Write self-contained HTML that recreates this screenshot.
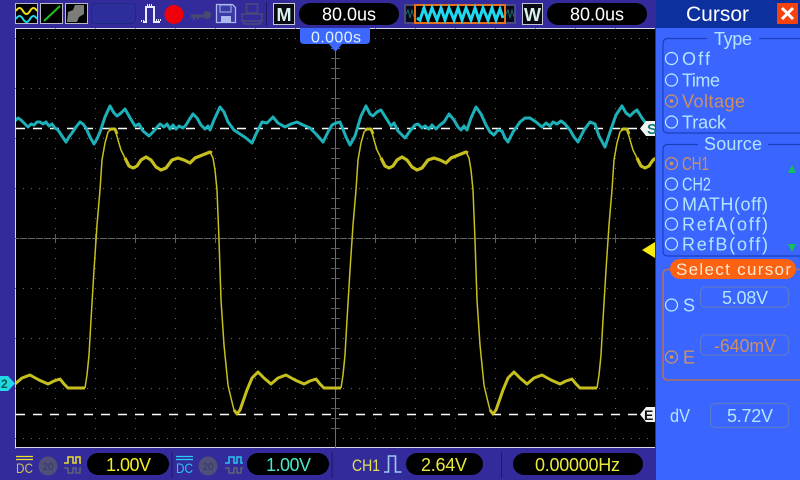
<!DOCTYPE html>
<html><head><meta charset="utf-8"><style>
html,body{margin:0;padding:0;background:#332a9c;width:800px;height:480px;overflow:hidden}
svg{display:block;font-family:"Liberation Sans",sans-serif}
text{font-family:"Liberation Sans",sans-serif}
.t{fill:#b4e4ff;font-size:18px}
.o{fill:#cf8f60;font-size:18px}
.r{fill:none;stroke:#c6ecff;stroke-width:1.2}
.ro{fill:none;stroke:#d2925e;stroke-width:1.2}
.box{fill:none;stroke:#5c78cf;stroke-width:1.2}
.pill{fill:#000}
</style></head><body>
<svg width="800" height="480" viewBox="0 0 800 480" xmlns="http://www.w3.org/2000/svg">
<defs>
<pattern id="hd" x="15" y="38" width="8" height="50" patternUnits="userSpaceOnUse"><rect x="0" y="0" width="1" height="1" fill="#6a6a6a"/></pattern>
<pattern id="vd" x="15" y="28" width="40" height="10" patternUnits="userSpaceOnUse"><rect x="0" y="0" width="1" height="1" fill="#6a6a6a"/></pattern>
<clipPath id="scr"><rect x="16" y="29" width="639" height="419"/></clipPath>
<g id="yt"><polyline fill="none" stroke="#c6c01f" stroke-width="1.5" stroke-linejoin="round" points="85,388 87,375 89,355 91,320 94,270 97,225 100,190 102,160 105,143 108,132 111,129 115,129 118,140 121,150 125,158 129,166 133,168 137,166 141,160 146,157 151,160 156,167 161,170 166,168 172,160 178,158 184,160 190,163 195,158 200,156 205,154 210,152 213,158 215,170 217,190 219,240 221,300 224,345 228,385 231,398 234,410 237,413 240,410 243,403 247,390 252,378 258,372 264,378 271,384 278,378 286,375 295,380 304,384 310,381 316,379 320,384 324,388 332,388 341,388"/>
<polyline fill="none" stroke="#c6c01f" stroke-width="3" stroke-linejoin="round" points="109,130 111,129 115,129 117,134"/>
<polyline fill="none" stroke="#c6c01f" stroke-width="3.2" stroke-linejoin="round" points="125,158 129,166 133,168 137,166 141,160 146,157 151,160 156,167 161,170 166,168 172,160 178,158 184,160 190,163 195,158 200,156 205,154 210,152 212,153"/>
<polyline fill="none" stroke="#c6c01f" stroke-width="3" stroke-linejoin="round" points="234,410 237,414 240,410 247,390 252,378 258,372 264,378 271,384 278,378 286,375 295,380 304,384 310,381 316,379 320,384 324,388 332,388 341,388"/></g>
</defs>

<!-- base -->
<rect width="800" height="480" fill="#332a9c"/>
<rect x="15" y="28" width="640" height="420" fill="#000"/>
<path d="M15.500 448.500V28.500H655M15 447.500H655" fill="none" stroke="#d6d6ee" stroke-width="1"/>

<!-- grid -->
<rect x="15" y="38" width="640" height="401" fill="url(#hd)"/>
<rect x="55" y="28" width="600" height="420" fill="url(#vd)"/>
<path d="M16 238.500H655" stroke="#666" stroke-width="1" stroke-dasharray="3 1" fill="none"/>
<path d="M335.500 29V448" stroke="#6e6e6e" stroke-width="1" fill="none"/>
<path d="M331 48.500h9M331 58.500h9M331 68.500h9M331 78.500h9M331 98.500h9M331 108.500h9M331 118.500h9M331 128.500h9M331 148.500h9M331 158.500h9M331 168.500h9M331 178.500h9M331 198.500h9M331 208.500h9M331 218.500h9M331 228.500h9M331 248.500h9M331 258.500h9M331 268.500h9M331 278.500h9M331 298.500h9M331 308.500h9M331 318.500h9M331 328.500h9M331 348.500h9M331 358.500h9M331 368.500h9M331 378.500h9M331 398.500h9M331 408.500h9M331 418.500h9M331 428.500h9" stroke="#5e5e5e" stroke-width="1" fill="none"/>
<path d="M55.500 234v9M95.500 234v9M135.500 234v9M175.500 234v9M215.500 234v9M255.500 234v9M295.500 234v9M375.500 234v9M415.500 234v9M455.500 234v9M495.500 234v9M535.500 234v9M575.500 234v9M615.500 234v9" stroke="#5e5e5e" stroke-width="1" fill="none"/>

<!-- traces -->
<g clip-path="url(#scr)">
<path d="M16 128.500H655M16 414.500H655" stroke="#fff" stroke-width="1.400" stroke-dasharray="9 8" fill="none"/>
<use href="#yt" x="-256"/><use href="#yt"/><use href="#yt" x="256"/><use href="#yt" x="512"/>
<polyline fill="none" stroke="#1cb0b8" stroke-width="3" stroke-linejoin="round" points="15,121 18,118 21,120 24,123 28,127 31,124 34,125 37,122 40,122 43,124 46,122 49,126 52,124 55,128 58,130 62,136 66,142 69,137 72,133 76,127 80,122 83,124 86,128 90,137 94,144 97,139 100,132 105,117 110,106 114,113 117,116 121,113 125,109 129,116 135,126 139,124 143,131 149,136 154,131 158,126 160,124 164,127 167,124 170,129 173,125 176,129 179,126 183,128 186,125 189,120 193,114 197,118 201,125 205,129 208,126 210,130 214,120 220,107 224,112 228,122 234,130 240,134 246,138 252,143 256,134 262,122 267,123 273,117 278,123 285,127 291,124 297,122 303,125 310,128 316,134 323,142 328,132 332,125 336,123 340,122 342,127 346,137 350,145 355,136 361,116 366,106 370,114 373,116 377,112 381,110 386,118 391,126 394,123 398,131 405,138 410,131 415,125 418,124 422,128 425,126 429,129 432,125 436,129 440,125 444,122 449,114 454,120 458,127 461,130 464,126 467,130 471,118 476,107 481,114 486,125 490,132 494,135 498,130 502,131 505,138 508,142 513,132 520,122 525,118 530,118 536,122 542,127 546,123 550,126 553,122 557,124 561,121 565,124 570,130 574,137 578,142 584,130 590,122 595,124 599,136 605,147 610,132 616,115 622,106 626,113 630,116 634,112 637,110 642,118 647,125 655,128"/>
</g>

<!-- top bar -->
<rect x="15.500" y="3.500" width="22" height="20" fill="#000" stroke="#b8b8c8"/>
<path d="M16 11q3.500-6 7 0t7 0t7 0" fill="none" stroke="#f0e020" stroke-width="2"/>
<path d="M16 19q3.500-6 7 0t7 0t7 0" fill="none" stroke="#20d8f0" stroke-width="2"/>
<rect x="40.500" y="3.500" width="22" height="20" fill="#000" stroke="#b8b8c8"/>
<path d="M44 21L60 6" stroke="#20c020" stroke-width="2"/>
<rect x="65.500" y="3.500" width="22" height="20" fill="#000" stroke="#b8b8c8"/>
<path d="M67 22l1-10 5-2 2-5 9 0 0 9-5 3-2 5z" fill="#7c7c78"/>
<rect x="91.500" y="3.500" width="44" height="20" rx="3" fill="#2d2e9c" stroke="#1c2a80"/>
<path d="M143 22h3V7h8v15h6" fill="none" stroke="#e8ecff" stroke-width="2"/>
<path d="M141 21h4M147 5h6M156 20h6" stroke="#e8ecff" stroke-width="2" stroke-dasharray="1 1"/>
<circle cx="174" cy="14.500" r="9.500" fill="#f00008"/>
<path d="M191 16h14" stroke="#4a4a70" stroke-width="3"/><circle cx="207" cy="15" r="4" fill="#4a4a70"/><path d="M194 17v3M198 17v2" stroke="#4a4a70" stroke-width="2"/>
<path d="M216.500 4.500h16l3 3v15h-19z" fill="#3a3aa8" stroke="#aeb8ec" stroke-width="1.300"/>
<rect x="220" y="5" width="11" height="7" fill="none" stroke="#aeb8ec"/><rect x="221" y="16" width="10" height="6" fill="#aeb8ec"/>
<path d="M246.500 4h11v9h-11zM242 14h20v7h-20zM244 21h16v3h-16z" fill="none" stroke="#4a4a78" stroke-width="1.500"/>
<path d="M266.500 2v24" stroke="#1d1a60" stroke-width="1"/>
<rect x="273.500" y="3.500" width="21" height="21" fill="#0a0a14" stroke="#c8c8d4"/>
<text x="284" y="21" font-size="18" font-weight="bold" fill="#d8f4ea" text-anchor="middle">M</text>
<rect x="299" y="3" width="100" height="22" rx="11" class="pill"/>
<text x="322" y="20.500" font-size="18" fill="#fff" textLength="54" lengthAdjust="spacing">80.0us</text>
<rect x="404" y="4" width="112" height="20" fill="#4a4a80"/>
<rect x="406" y="6" width="9" height="16" fill="#050a18"/><rect x="505" y="6" width="9" height="16" fill="#050a18"/>
<path d="M406 14l2-4 2 8 2-8 2 7M506 14l2-4 2 8 2-8 2 7" fill="none" stroke="#176c6c"/>
<rect x="415" y="5" width="90" height="18" fill="#000" stroke="#e87018" stroke-width="2"/>
<polyline fill="none" stroke="#20d8f0" stroke-width="3" points="417,18 420,20 424,8 428,20 432,8 437,20 441,8 445,20 449,8 454,20 458,8 462,20 466,8 471,20 475,8 479,20 483,8 488,20 492,8 496,20 500,9 503,18"/>
<rect x="522.500" y="3.500" width="20" height="21" fill="#0a0a14" stroke="#c8c8d4"/>
<text x="532.500" y="21" font-size="18" font-weight="bold" fill="#d8f4ea" text-anchor="middle">W</text>
<rect x="547" y="3" width="100" height="22" rx="11" class="pill"/>
<text x="570" y="20.500" font-size="18" fill="#fff" textLength="54" lengthAdjust="spacing">80.0us</text>

<!-- trigger time flag -->
<path d="M300 28H370V40q0 4-4 4H342L335.500 52 329 44H304q-4 0-4-4z" fill="#3c68ff"/>
<text x="311" y="42.500" font-size="16" fill="#dff2ff" textLength="50" lengthAdjust="spacing">0.000s</text>

<!-- panel -->
<rect x="656" y="0" width="144" height="480" fill="#3a66ff"/>
<rect x="656" y="0" width="144" height="28" fill="#0c319f"/>
<text x="686" y="21" font-size="21" fill="#fff" textLength="63" lengthAdjust="spacingAndGlyphs">Cursor</text>
<rect x="777" y="3" width="21" height="21" fill="#f5420f"/>
<path d="M782 8l11 11M793 8l-11 11" stroke="#fff" stroke-width="3"/>

<path d="M707 38.500H668q-5 0-5 5V128q0 5 5 5H800M759 38.500H800" fill="none" stroke="#1a3fbc" stroke-width="1.200"/>
<text x="714" y="45" class="t" textLength="38" lengthAdjust="spacing">Type</text>
<circle cx="671.500" cy="58.500" r="6" class="r"/><text x="682" y="65" class="t" textLength="28" lengthAdjust="spacing">Off</text>
<circle cx="671.500" cy="80" r="6" class="r"/><text x="682" y="86.500" class="t" textLength="38" lengthAdjust="spacing">Time</text>
<circle cx="671.500" cy="101" r="6" class="ro"/><circle cx="671.500" cy="101" r="1.800" fill="#d2925e"/><text x="682" y="107.500" class="o" textLength="63" lengthAdjust="spacing">Voltage</text>
<circle cx="671.500" cy="122" r="6" class="r"/><text x="682" y="128.500" class="t" textLength="44" lengthAdjust="spacing">Track</text>

<path d="M698 144.500H668q-5 0-5 5V251q0 5 5 5H800M768 144.500H800" fill="none" stroke="#1a3fbc" stroke-width="1.200"/>
<text x="704" y="150" class="t" textLength="58" lengthAdjust="spacing">Source</text>
<circle cx="671.500" cy="163.500" r="6" class="ro"/><circle cx="671.500" cy="163.500" r="1.800" fill="#d2925e"/><text x="682" y="170" class="o" textLength="27" lengthAdjust="spacingAndGlyphs">CH1</text>
<circle cx="671.500" cy="184" r="6" class="r"/><text x="682" y="190.500" class="t" textLength="29" lengthAdjust="spacingAndGlyphs">CH2</text>
<circle cx="671.500" cy="204" r="6" class="r"/><text x="682" y="210.500" class="t" textLength="86" lengthAdjust="spacing">MATH(off)</text>
<circle cx="671.500" cy="224" r="6" class="r"/><text x="682" y="230.500" class="t" textLength="86" lengthAdjust="spacing">RefA(off)</text>
<circle cx="671.500" cy="244" r="6" class="r"/><text x="682" y="250.500" class="t" textLength="86" lengthAdjust="spacing">RefB(off)</text>
<path d="M792 165l4 8h-8zM792 252l4-8h-8z" fill="#14c05a"/>

<path d="M800 269.500H668q-5 0-5 5V375q0 5 5 5H800" fill="none" stroke="#b4705c" stroke-width="1.600"/>
<rect x="670" y="259" width="126" height="20" rx="10" fill="#fb6212"/>
<text x="676" y="275" font-size="17" fill="#ffe6cf" textLength="115" lengthAdjust="spacing">Select cursor</text>
<circle cx="671.500" cy="305" r="6" class="r"/><text x="683" y="311.500" class="t">S</text>
<rect x="700.500" y="287" width="88" height="20" rx="5" class="box"/>
<text x="722" y="304" class="t" textLength="46" lengthAdjust="spacing">5.08V</text>
<circle cx="671.500" cy="357" r="6" class="ro"/><circle cx="671.500" cy="357" r="1.800" fill="#d2925e"/><text x="683" y="363.500" class="o">E</text>
<rect x="700.500" y="335" width="88" height="20" rx="5" class="box"/>
<text x="714" y="352" class="o" textLength="62" lengthAdjust="spacingAndGlyphs">-640mV</text>
<text x="670" y="422" class="t" textLength="20" lengthAdjust="spacingAndGlyphs">dV</text>
<rect x="710.500" y="403.500" width="78" height="24" rx="5" class="box"/>
<text x="727" y="422" class="t" textLength="46" lengthAdjust="spacing">5.72V</text>

<!-- markers -->
<path d="M655 121H646L640 128.500 646 136H655z" fill="#f2f2f2"/>
<text x="647" y="134" font-size="15" font-weight="bold" fill="#127a7a">S</text>
<path d="M655 407H646L640 414.500 646 422H655z" fill="#f2f2f2"/>
<text x="644" y="420" font-size="14" font-weight="bold" fill="#111">E</text>
<path d="M655 242V258L642 250z" fill="#f6ea10"/>
<path d="M0 376H8L15 383.500 8 391H0z" fill="#22d8e8"/>
<text x="1" y="388" font-size="12" font-weight="bold" fill="#0a5a40">2</text>

<!-- bottom bar -->
<path d="M16 456.500H33M16 459.500H33" stroke="#e8e030" stroke-width="1.300"/>
<text x="16" y="473" font-size="14" fill="#c8c25a" textLength="17" lengthAdjust="spacingAndGlyphs">DC</text>
<circle cx="48" cy="466" r="9.500" fill="#4f4f78"/><text x="48" y="470" font-size="10" fill="#35356a" text-anchor="middle">20</text>
<path d="M64 463h4v-6h5v6h3v-6h4v6h1" fill="none" stroke="#e8e030" stroke-width="1.500"/>
<path d="M64 468h4v5h5v-5h3v5h4v-5h1" fill="none" stroke="#6a6a70" stroke-width="1.300"/>
<rect x="87" y="453" width="82" height="22" rx="11" class="pill"/>
<text x="106" y="471" font-size="18" fill="#f2f020" textLength="45" lengthAdjust="spacing">1.00V</text>
<path d="M172 452v26" stroke="#1d1a60" stroke-width="1"/>
<path d="M176 456.500H193M176 459.500H193" stroke="#25d0f0" stroke-width="1.300"/>
<text x="176" y="473" font-size="14" fill="#25c8ee" textLength="17" lengthAdjust="spacingAndGlyphs">DC</text>
<circle cx="208" cy="466" r="9.500" fill="#4f4f78"/><text x="208" y="470" font-size="10" fill="#35356a" text-anchor="middle">20</text>
<path d="M225 463h4v-6h5v6h3v-6h4v6h2" fill="none" stroke="#25c8f0" stroke-width="1.500"/>
<path d="M225 468h4v5h5v-5h3v5h4v-5h2" fill="none" stroke="#6a6a70" stroke-width="1.300"/>
<rect x="247" y="453" width="82" height="22" rx="11" class="pill"/>
<text x="266" y="471" font-size="18" fill="#4ce8c8" textLength="45" lengthAdjust="spacing">1.00V</text>
<path d="M332 452v26" stroke="#1d1a60" stroke-width="1"/>
<text x="352" y="471" font-size="17" fill="#e4e05a" textLength="28" lengthAdjust="spacingAndGlyphs">CH1</text>
<path d="M384 472h4.500V456h7v16h6" fill="none" stroke="#9cc8f4" stroke-width="1.600"/>
<rect x="406" y="453" width="77" height="22" rx="11" class="pill"/>
<text x="421" y="471" font-size="18" fill="#e8e840" textLength="46" lengthAdjust="spacing">2.64V</text>
<path d="M501.500 452v26" stroke="#1d1a60" stroke-width="1"/>
<rect x="513" y="453" width="130" height="22" rx="11" class="pill"/>
<text x="535" y="471" font-size="18" fill="#e8e840" textLength="85" lengthAdjust="spacing">0.00000Hz</text>
</svg>
</body></html>
